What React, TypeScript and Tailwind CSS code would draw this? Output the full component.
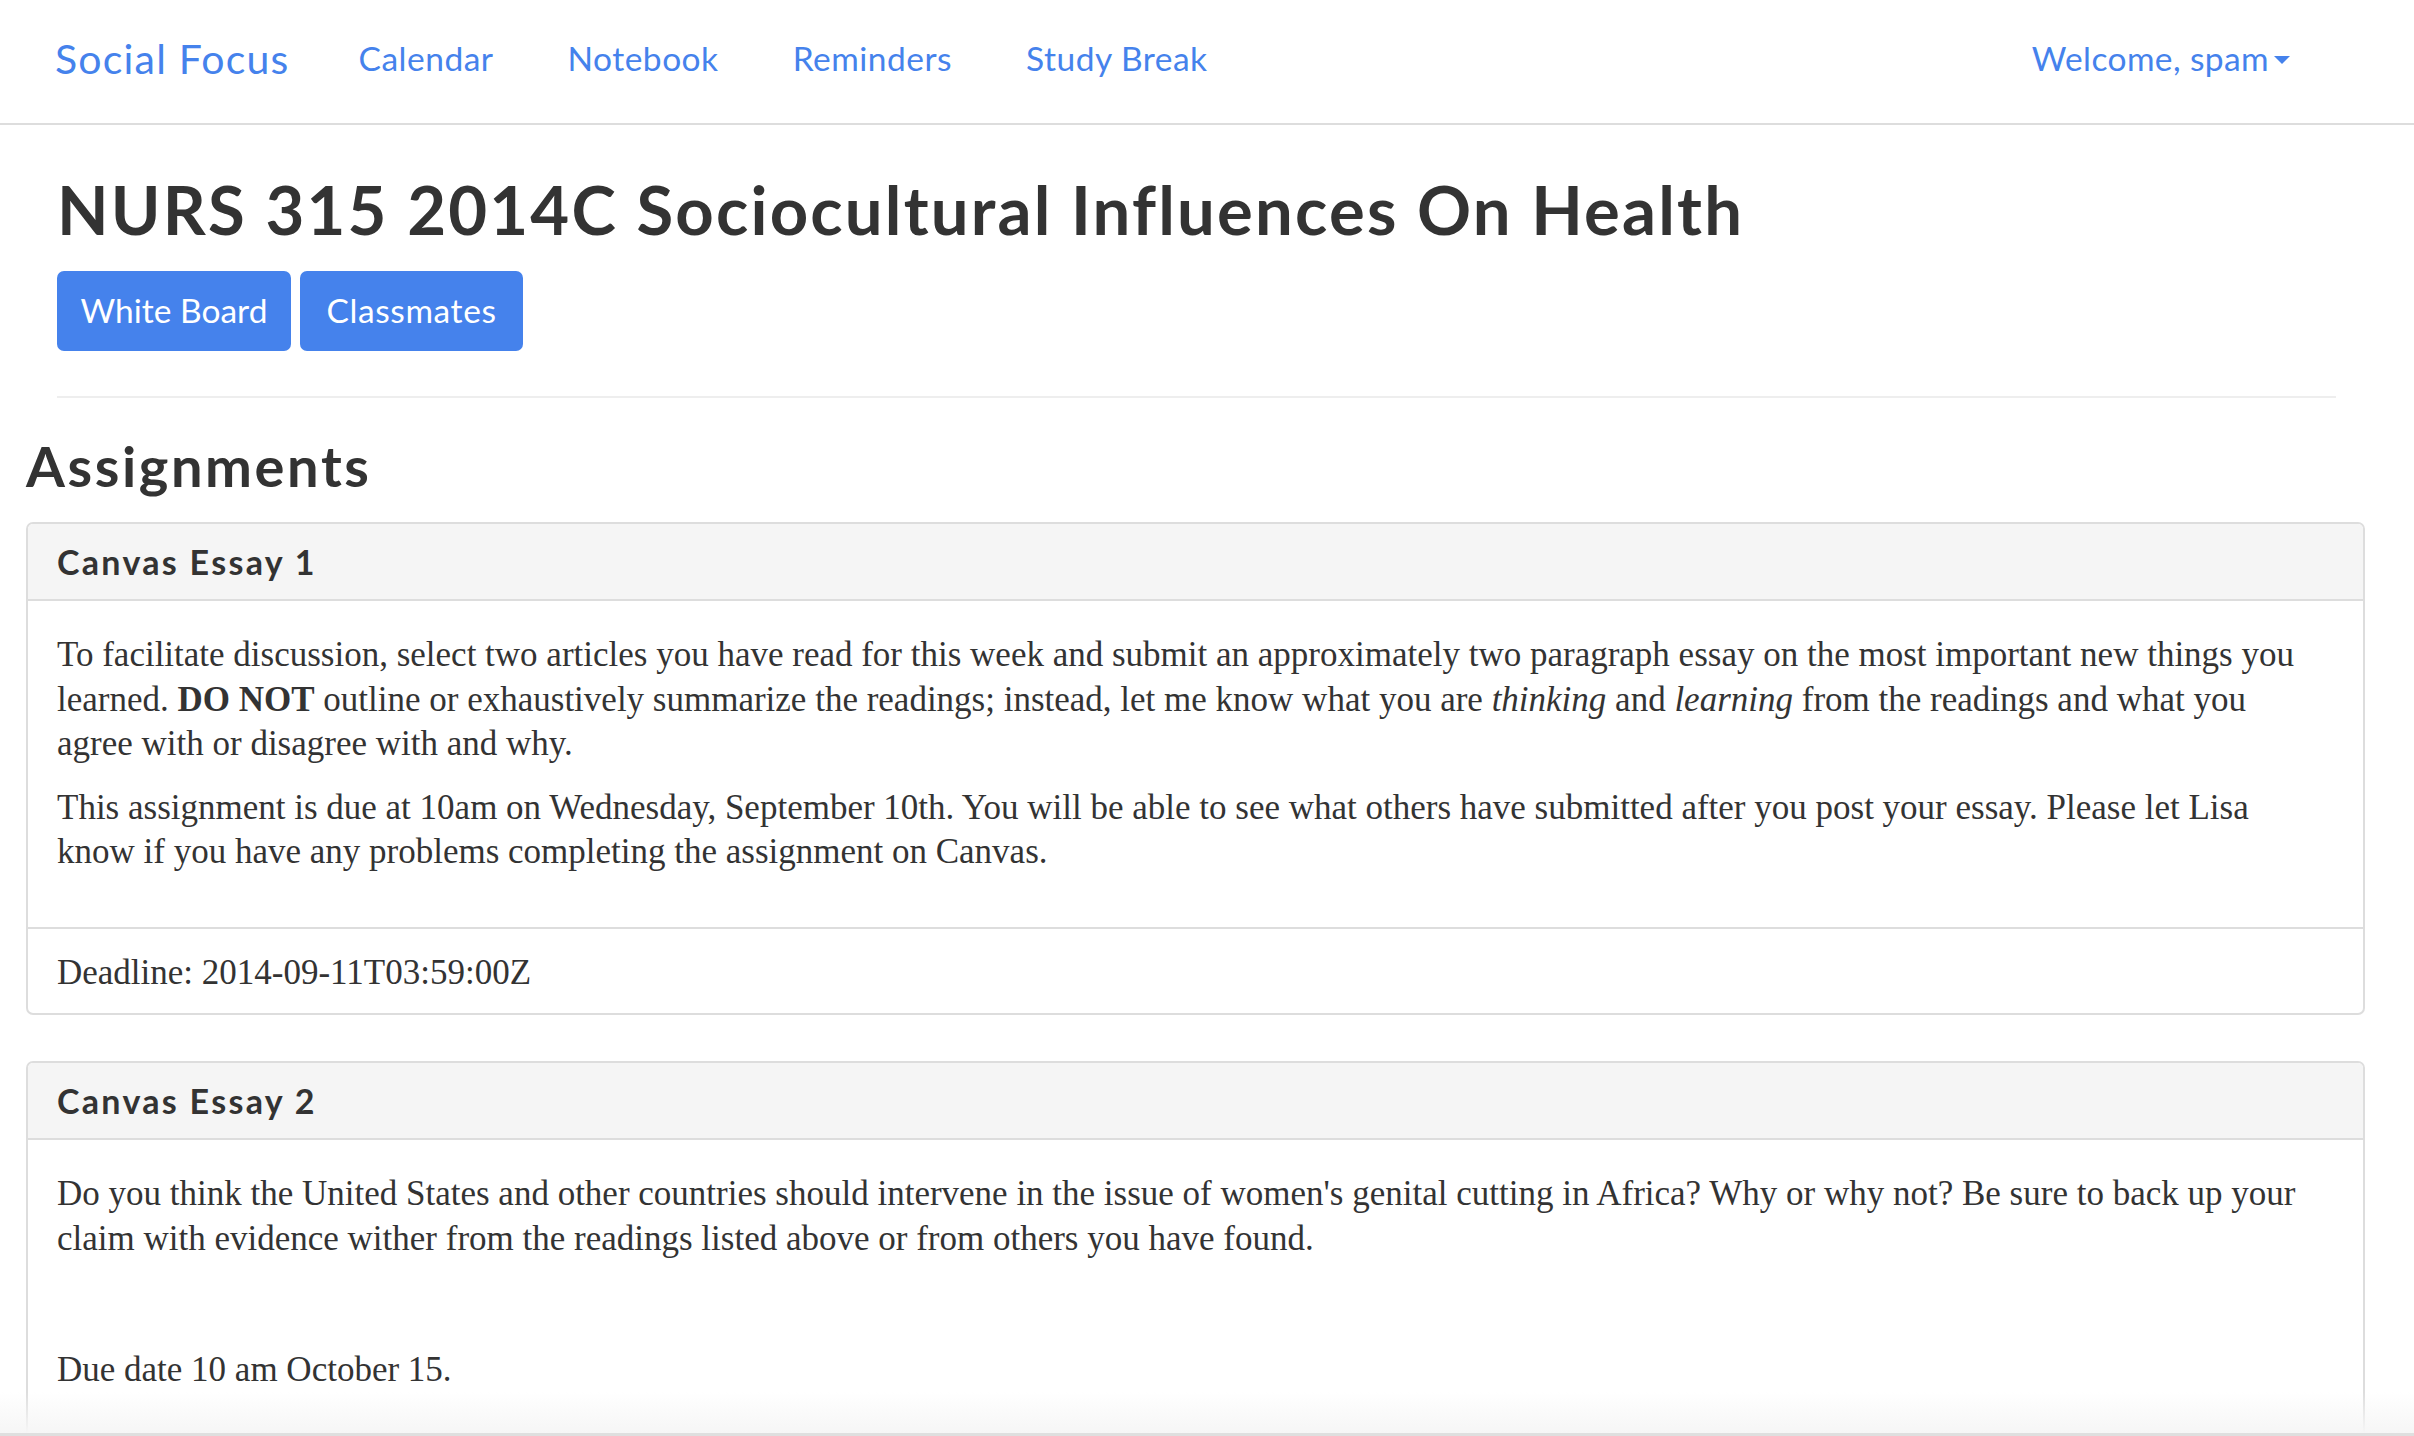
import React from 'react'

const navLinks = ['Calendar', 'Notebook', 'Reminders', 'Study Break']

interface PanelProps {
  title: string
  children: React.ReactNode
  footer?: React.ReactNode
}

function Panel({ title, children, footer }: PanelProps) {
  return (
    <div className="mb-[46px] overflow-hidden rounded-[7px] border-2 border-[#dddddd] bg-white">
      <div className="border-b-2 border-[#dddddd] bg-[#f5f5f5] px-[29px] py-[19px] font-['Lato',sans-serif] text-[34px] font-bold leading-[37px] tracking-[2.3px] text-[#333]">
        {title}
      </div>
      <div className="px-[29px] pt-[32px] pb-[34px]">{children}</div>
      {footer && (
        <div className="border-t-2 border-[#dddddd] px-[29px] pt-[22px] pb-[17px]">{footer}</div>
      )}
    </div>
  )
}

export default function App() {
  return (
    <div className="relative h-screen overflow-hidden bg-white font-['Liberation_Serif',serif] text-[35px] leading-[44.6px] text-[#333]">
      {/* Navbar */}
      <nav className="flex h-[125px] items-center justify-between border-b-2 border-[#dddddd] pb-[6px] pl-[55px] pr-[87px] font-['Lato',sans-serif] text-[#4582ec]">
        <div className="flex items-center">
          <a href="#" className="mr-[32px] text-[41px] leading-none tracking-[1.2px]">
            Social Focus
          </a>
          {navLinks.map((link) => (
            <a key={link} href="#" className="px-[37px] text-[33.5px] leading-none tracking-[0.5px]">
              {link}
            </a>
          ))}
        </div>
        <a href="#" className="flex items-center px-[37px] text-[33.5px] leading-none tracking-[0.4px]">
          Welcome, spam
          <span className="ml-[5px] mt-[2px] h-0 w-0 border-x-[8px] border-t-[8px] border-x-transparent border-t-[#4582ec]" />
        </a>
      </nav>

      {/* Course header */}
      <div className="px-[57px] pt-[48px]">
        <h1 className="font-['Lato',sans-serif] text-[67px] font-bold leading-[1.1] tracking-[2.2px] text-[#333]">
          NURS 315 2014C Sociocultural Influences On Health
        </h1>
        <div className="mt-[24px] flex gap-[9px] font-['Lato',sans-serif]">
          <button className="flex h-[80px] w-[234px] items-center justify-center rounded-[7px] bg-[#4582ec] text-[33.5px] text-white">
            White Board
          </button>
          <button className="flex h-[80px] w-[223px] items-center justify-center rounded-[7px] bg-[#4582ec] text-[33.5px] tracking-[0.6px] text-white">
            Classmates
          </button>
        </div>
        <div className="mt-[45px] mr-[21px] h-[2px] bg-[#eeeeee]" />
      </div>

      {/* Assignments */}
      <div className="pl-[26px] pr-[49px]">
        <h2 className="mt-[37px] mb-[26px] font-['Lato',sans-serif] text-[56px] font-bold leading-[1.1] tracking-[2.6px] text-[#333]">
          Assignments
        </h2>

        <Panel title="Canvas Essay 1" footer={<p>Deadline: 2014-09-11T03:59:00Z</p>}>
          <p className="mb-[18.6px]">
            To facilitate discussion, select two articles you have read for this week and submit an approximately two paragraph essay on the most important new things you
            <br />
            learned. <strong>DO NOT</strong> outline or exhaustively summarize the readings; instead, let me know what you are <em>thinking</em> and <em>learning</em> from the readings and what you
            <br />
            agree with or disagree with and why.
          </p>
          <p className="mb-[18.6px]">
            This assignment is due at 10am on Wednesday, September 10th. You will be able to see what others have submitted after you post your essay. Please let Lisa
            <br />
            know if you have any problems completing the assignment on Canvas.
          </p>
        </Panel>

        <Panel title="Canvas Essay 2">
          <p className="mb-[18.6px]">
            Do you think the United States and other countries should intervene in the issue of women's genital cutting in Africa? Why or why not? Be sure to back up your
            <br />
            claim with evidence wither from the readings listed above or from others you have found.
          </p>
          <p className="mb-[24px]">&nbsp;</p>
          <p className="mb-[18.6px]">Due date 10 am October 15.</p>
        </Panel>
      </div>

      {/* bottom fade of the window */}
      <div className="pointer-events-none absolute inset-x-0 bottom-0 h-[44px] border-b-[3px] border-[#dfdfdf] bg-linear-to-b from-transparent to-[#f6f6f6]" />
    </div>
  )
}
